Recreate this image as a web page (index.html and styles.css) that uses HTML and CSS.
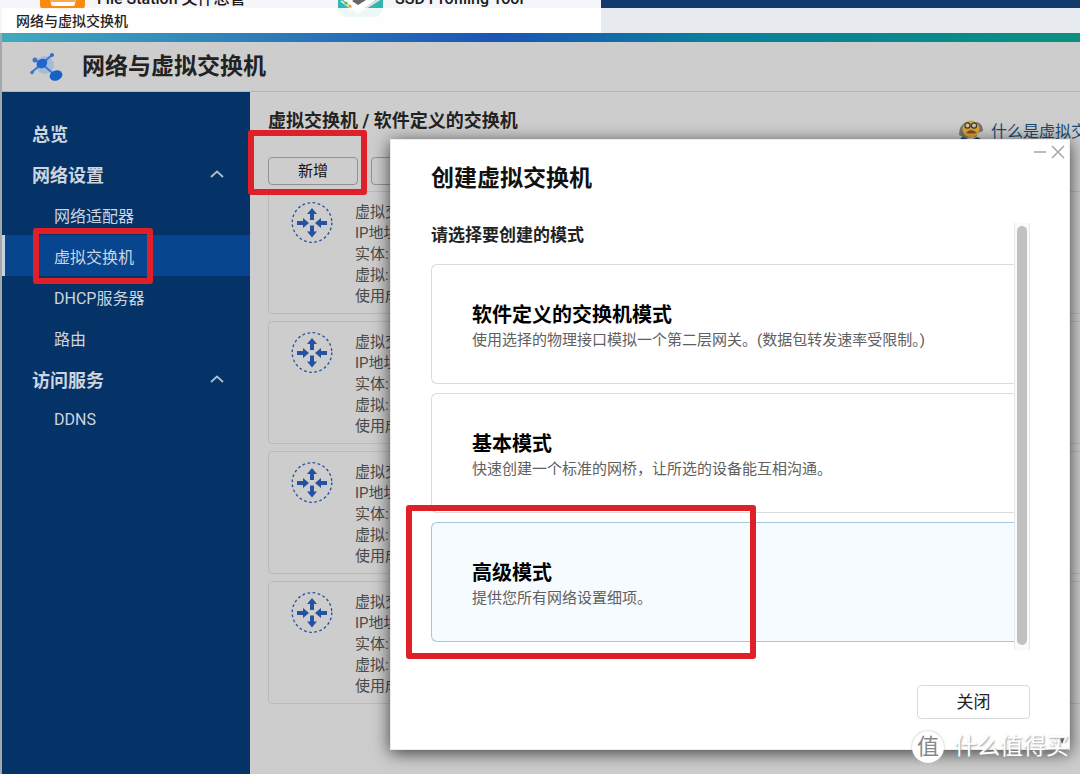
FILE: index.html
```html
<!DOCTYPE html>
<html lang="zh-CN">
<head>
<meta charset="utf-8">
<title>网络与虚拟交换机</title>
<link rel="stylesheet" href="styles.css">
</head>
<body>
<svg class="defs" aria-hidden="true">
  <symbol id="switch" viewBox="0 0 42 42">
    <circle cx="21" cy="20.500" r="19.800" fill="none" stroke="#24509b" stroke-width="1.300" stroke-dasharray="2.700 2.484"/>
    <g fill="#2553a3">
      <path d="M21 6l5 6h-3v6h-4v-6h-3z"/>
      <path d="M21 35.500l5-6h-3v-6h-4v6h-3z"/>
      <path d="M18 21l-6-5v3h-6v4h6v3z"/>
      <path d="M24 21l6-5v3h6v4h-6v3z"/>
    </g>
  </symbol>
  <symbol id="chevron" viewBox="0 0 14 8"><path d="M1 7l6-5.500 6 5.500" fill="none" stroke="#aebdd0" stroke-width="1.800"/></symbol>
</svg>

<div class="desktop">
  <div class="launcher">
    <div class="app">
      <svg class="app-icon" viewBox="0 0 45 45"><path d="M0 0h45v33q0 4-4 4H4q-4 0-4-4z" fill="#f98a12"/><path d="M9 8h29l-3 24q0 2-2 2H13q-2 0-2-2z" fill="#fff"/><path d="M11 29h24" stroke="#f98a12" stroke-width="1.500"/></svg>
      <span>File Station 文件总管</span>
    </div>
    <div class="app">
      <svg class="app-icon" viewBox="0 0 45 45"><rect width="45" height="45" rx="9" fill="#35b5b0"/><path d="M3 26l20-14 19 13-22 16z" fill="#fff"/><path d="M3 29l17 12 22-14" fill="none" stroke="#dfe5e6" stroke-width="2"/><path d="M14 29l8-5 6 4-8 5z" fill="#666"/><circle cx="8" cy="31" r="1.500" fill="#5b3"/><circle cx="12" cy="34" r="1.500" fill="#e92"/></svg>
      <span>SSD Profiling Tool</span>
    </div>
  </div>
</div>

<div class="window">
  <div class="titlebar">网络与虚拟交换机</div>
  <div class="ribbon"></div>
  <header class="app-header">
    <svg class="logo" viewBox="0 0 34 30">
      <circle cx="15" cy="13" r="9" fill="#8fb0de" opacity=".65"/>
      <path d="M2 20L22 3M5 8l7 4 14 12" fill="none" stroke="#3a76cc" stroke-width="2"/>
      <ellipse cx="12" cy="11.500" rx="5.500" ry="4.500" fill="#1e66cc" transform="rotate(-30 12 11.500)"/><circle cx="22" cy="3" r="2" fill="#2d6fc9"/>
      <circle cx="5" cy="8" r="2.500" fill="#3a76cc"/><circle cx="2" cy="20.500" r="1.800" fill="#3a76cc"/>
      <ellipse cx="26" cy="23.500" rx="6.500" ry="5" fill="#1760c8" transform="rotate(-20 26 23.500)"/>
    </svg>
    <h1>网络与虚拟交换机</h1>
  </header>

  <div class="body">
    <nav class="sidebar">
      <a class="group" href="#">总览</a>
      <a class="group" href="#">网络设置<svg class="chevron"><use href="#chevron"/></svg></a>
      <a class="item" href="#">网络适配器</a>
      <a class="item active" href="#">虚拟交换机<span class="mark mark-nav"></span></a>
      <a class="item" href="#">DHCP服务器</a>
      <a class="item" href="#">路由</a>
      <a class="group" href="#">访问服务<svg class="chevron"><use href="#chevron"/></svg></a>
      <a class="item" href="#">DDNS</a>
    </nav>

    <main class="main">
      <div class="main-top">
        <h2>虚拟交换机 / 软件定义的交换机</h2>
        <a class="help" href="#">
          <svg class="prof" viewBox="0 0 26 26">
            <path d="M1 16q0-10 7-13h11q6 2 6 9l-5 2-2 4-11 1z" fill="#77746f"/>
            <circle cx="13" cy="10" r="8.500" fill="#d9a536"/>
            <circle cx="9.500" cy="6.500" r="2.600" fill="#c9c3b4" stroke="#3c3733" stroke-width="1.200"/><circle cx="16" cy="6.500" r="2.600" fill="#c9c3b4" stroke="#3c3733" stroke-width="1.200"/>
            <path d="M8 14q5-6 11 0-6 1-11 0z" fill="#8b4a22"/><path d="M0 26q2-8 5-8l8 3 6-3q5 1 7 8z" fill="#26435f"/>
          </svg>
          <span>什么是虚拟交换机？</span>
        </a>
      </div>
      <div class="toolbar">
        <div class="marked"><button class="tool" type="button">新增</button><span class="mark mark-add"></span></div>
        <button class="tool" type="button" aria-label="更多"></button>
      </div>
      <div class="switches">
        <section class="switch"><svg class="switch-icon"><use href="#switch"/></svg><div class="lines"><p>虚拟交换机</p><p>IP地址:</p><p>实体:</p><p>虚拟:</p><p>使用成员:</p></div></section>
        <section class="switch"><svg class="switch-icon"><use href="#switch"/></svg><div class="lines"><p>虚拟交换机</p><p>IP地址:</p><p>实体:</p><p>虚拟:</p><p>使用成员:</p></div></section>
        <section class="switch"><svg class="switch-icon"><use href="#switch"/></svg><div class="lines"><p>虚拟交换机</p><p>IP地址:</p><p>实体:</p><p>虚拟:</p><p>使用成员:</p></div></section>
        <section class="switch"><svg class="switch-icon"><use href="#switch"/></svg><div class="lines"><p>虚拟交换机</p><p>IP地址:</p><p>实体:</p><p>虚拟:</p><p>使用成员:</p></div></section>
      </div>
    </main>
  </div>
</div>

<div class="dialog" role="dialog" aria-labelledby="dialog-title">
  <div class="controls">
    <button type="button" aria-label="最小化"><svg viewBox="0 0 14 14"><path d="M1 7h12" stroke="#aaa" stroke-width="1.600"/></svg></button>
    <button type="button" aria-label="关闭窗口"><svg viewBox="0 0 14 14"><path d="M1 1l12 12M13 1L1 13" stroke="#aaa" stroke-width="1.600"/></svg></button>
  </div>
  <h2 class="dialog-title" id="dialog-title">创建虚拟交换机</h2>
  <div class="scroller">
    <div class="modes">
      <h3>请选择要创建的模式</h3>
      <button class="mode" type="button"><strong>软件定义的交换机模式</strong><span>使用选择的物理接口模拟一个第二层网关。(数据包转发速率受限制。)</span></button>
      <button class="mode" type="button"><strong>基本模式</strong><span>快速创建一个标准的网桥，让所选的设备能互相沟通。</span></button>
      <div class="marked"><button class="mode selected" type="button"><strong>高级模式</strong><span>提供您所有网络设置细项。</span></button><span class="mark mark-mode"></span></div>
    </div>
    <div class="track"><div class="thumb"></div></div>
  </div>
  <div class="actions"><button class="close" type="button">关闭</button></div>
  <svg class="grip" viewBox="0 0 12 12"><path d="M5 5l6-3-4 8z" fill="#555"/></svg>
</div>

<div class="watermark"><span class="seal">值</span><span>什么值得买</span></div>
</body>
</html>
```
FILE: styles.css
```css
* { box-sizing: border-box; }

body {
  margin: 0;
  height: 100vh;
  padding: 8px 0 0 2px;
  overflow: hidden;
  position: relative;
  background: #a3a8ad;
  color: #222;
  font-family: Roboto, "Noto Sans CJK SC", sans-serif;
}

h1, h2, h3, p { margin: 0; }
a { color: inherit; text-decoration: none; }
button { font-family: inherit; padding: 0; cursor: pointer; }
.defs { position: absolute; width: 0; height: 0; }

/* Desktop behind the window */
.desktop {
  position: absolute;
  inset: 0 0 auto 0;
  height: 33px;
  background: #123a6c;
  overflow: hidden;
}
.launcher {
  display: grid;
  grid-template: 17px / 298px 1fr;
  align-items: end;
  width: 601px;
  height: 33px;
  padding-left: 40px;
  background: #f5f6f9;
}
.app {
  display: flex;
  gap: 12px;
  align-items: center;
  height: 45px;
  color: #1b1b1b;
  font-size: 16px;
  font-weight: 500;
  line-height: 24px;
}
.app span { margin-top: 8px; }
.app-icon { width: 45px; height: 45px; }

/* Application window */
.window {
  position: relative;
  display: flex;
  flex-direction: column;
  height: 100%;
  overflow: hidden;
}
.titlebar {
  flex: none;
  height: 25px;
  padding-left: 14px;
  background: rgba(255, 255, 255, .9);
  font-size: 14px;
  font-weight: 500;
  line-height: 26px;
}
.ribbon {
  flex: none;
  height: 9px;
  background: linear-gradient(90deg, #41a9bd, #1b55b5 46%, #0a7f9c 66%, #07917f);
}
.app-header {
  flex: none;
  display: flex;
  align-items: center;
  gap: 18px;
  height: 50px;
  padding: 1px 0 0 28px;
  border-bottom: 1px solid #b3b3b3;
  background: #cdcdcd;
}
.app-header h1 { font-size: 23px; font-weight: 700; line-height: 32px; }
.logo { width: 34px; height: 30px; }
.body { flex: 1; display: flex; min-height: 0; }

.sidebar {
  flex: none;
  width: 248px;
  padding-top: 20px;
  background: #053368;
  color: #cdd5df;
}
.sidebar a {
  display: flex;
  align-items: center;
  position: relative;
  height: 41px;
}
.sidebar .group {
  justify-content: space-between;
  padding: 0 26px 0 30px;
  font-size: 18px;
  font-weight: 700;
}
.sidebar .item { padding-left: 52px; font-size: 16px; }
.sidebar .active { background: #08458f; box-shadow: inset 3px 0 #c9d3df; }
.chevron { width: 14px; height: 8px; }

.main {
  flex: 1;
  position: relative;
  margin-right: -73px;
  padding: 16px 18px 0;
  background: #cdcdcd;
}
.main-top { display: flex; justify-content: space-between; height: 36px; }
.main-top h2 { font-size: 18px; font-weight: 700; line-height: 26px; }
.help {
  display: flex;
  align-items: center;
  gap: 7px;
  padding-top: 12px;
  color: #174b76;
  font-size: 16px;
  line-height: 24px;
}
.prof { width: 26px; height: 26px; }
.toolbar { display: flex; gap: 13px; margin: 13px 0 6px; }
.tool {
  display: block;
  width: 90px;
  height: 28px;
  border: 1px solid #929292;
  border-radius: 4px;
  background: #cdcdcd;
  color: #111;
  font-size: 15px;
  line-height: 24px;
}
.switches { display: grid; gap: 7px; }
.switch {
  display: flex;
  gap: 22px;
  height: 123px;
  padding: 10px 22px;
  border: 1px solid #b8babd;
  border-radius: 4px;
}
.switch-icon { flex: none; width: 42px; height: 42px; }
.lines { color: #4a4a4a; font-size: 15px; line-height: 21px; }

/* Creation dialog */
.dialog {
  position: absolute;
  top: 139px;
  left: 390px;
  right: 10px;
  padding: 0 39px 30px 40px;
  border: 1px solid #ececec;
  background: #fff;
  box-shadow: 0 3px 16px rgba(0, 0, 0, .7);
}
.controls {
  display: flex;
  justify-content: flex-end;
  gap: 4px;
  height: 23px;
  padding-top: 5px;
  margin-right: -35px;
}
.controls button { width: 14px; height: 14px; border: 0; background: none; }
.controls svg { display: block; width: 14px; height: 14px; }
.dialog-title { color: #111; font-size: 23px; font-weight: 700; line-height: 32px; }
.scroller { display: flex; margin-top: 28px; }
.modes { flex: 1; display: grid; gap: 9px; padding-bottom: 8px; }
.modes h3 { font-size: 17px; font-weight: 700; line-height: 24px; padding-bottom: 8px; }
.mode {
  display: flex;
  flex-direction: column;
  justify-content: center;
  width: 100%;
  height: 120px;
  padding: 3px 0 0 40px;
  border: 1px solid #dcdcdc;
  border-right: 0;
  border-radius: 6px 0 0 6px;
  background: #fff;
  text-align: left;
}
.mode strong { color: #000; font-size: 20px; font-weight: 700; line-height: 28px; }
.mode span { color: #606060; font-size: 15px; line-height: 22px; }
.mode.selected { border-color: #a5c8d8; background: #f6fbff; }
.track {
  width: 16px;
  padding: 3px 2px 5px;
  border: solid #e8e8e8;
  border-width: 0 1px;
  background: #fafafa;
}
.thumb { width: 10px; height: 100%; border-radius: 5px; background: #c1c1c1; }
.actions { display: flex; justify-content: flex-end; padding-top: 35px; }
.close {
  width: 113px;
  height: 34px;
  border: 1px solid #d9d9d9;
  border-radius: 4px;
  background: #fff;
  color: #222;
  font-size: 17px;
  line-height: 28px;
}
.grip { position: absolute; right: 2px; bottom: 3px; width: 12px; height: 12px; }

/* Red callout frames */
.marked { position: relative; }
.mark {
  position: absolute;
  z-index: 2;
  border: 6px solid #df2029;
  border-radius: 3px;
  pointer-events: none;
}
.mark-nav { inset: -7px 97px -8px 31px; }
.mark-add { inset: -27px -9px -10px -20px; }
.mark-mode { inset: -17px 258px -17px -25px; }

.watermark {
  position: absolute;
  right: 11px;
  bottom: 10px;
  display: flex;
  align-items: center;
  gap: 10px;
  color: #fff;
  font-size: 23px;
  line-height: 34px;
  text-shadow: 1px 1px 2px #999;
}
.seal {
  width: 32px;
  height: 32px;
  border-radius: 50%;
  background: #fff;
  box-shadow: 0 0 2px #aaa;
  color: #888;
  font-size: 22px;
  line-height: 31px;
  text-align: center;
  text-shadow: none;
}
```
